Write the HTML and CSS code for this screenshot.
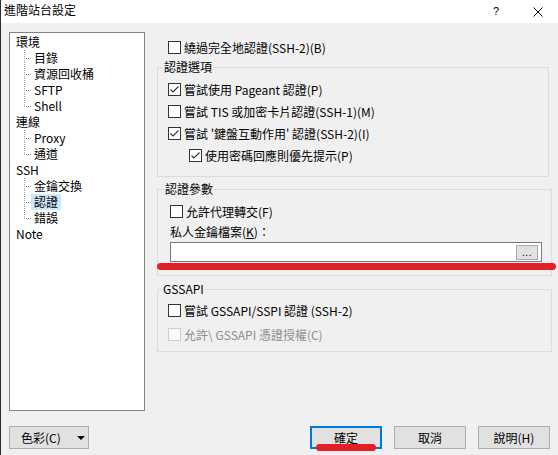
FILE: index.html
```html
<!DOCTYPE html>
<html lang="zh-Hant">
<head>
<meta charset="utf-8">
<title>進階站台設定</title>
<link rel="stylesheet" href="styles.css">
</head>
<body>
<div class="win">
  <div class="titlebar">
    <span class="title">進階站台設定</span>
    <span class="help">?</span>
    <svg class="close" width="10" height="10" viewBox="0 0 10 10"><path d="M0.5 0.5 L9.5 9.5 M9.5 0.5 L0.5 9.5" stroke="#000" stroke-width="1" fill="none"/></svg>
  </div>

  <div class="main">
    <div class="tree">
      <div class="node top">環境</div>
      <div class="node child"><i class="conn"></i><span class="lbl">目錄</span></div>
      <div class="node child"><i class="conn"></i><span class="lbl">資源回收桶</span></div>
      <div class="node child"><i class="conn"></i><span class="lbl">SFTP</span></div>
      <div class="node child last"><i class="conn"></i><span class="lbl">Shell</span></div>
      <div class="node top">連線</div>
      <div class="node child"><i class="conn"></i><span class="lbl">Proxy</span></div>
      <div class="node child last"><i class="conn"></i><span class="lbl">通道</span></div>
      <div class="node top">SSH</div>
      <div class="node child"><i class="conn"></i><span class="lbl">金鑰交換</span></div>
      <div class="node child"><i class="conn"></i><span class="lbl sel">認證</span></div>
      <div class="node child last"><i class="conn"></i><span class="lbl">錯誤</span></div>
      <div class="node top">Note</div>
    </div>

    <div class="panel">
      <div class="row first">
        <svg class="cb" viewBox="0 0 13 13"><rect x="0.5" y="0.5" width="12" height="12" fill="#fff" stroke="#333"/></svg>
        <span>繞過完全地認證(SSH-2)(B)</span>
      </div>

      <fieldset class="grp g1">
        <legend>認證選項</legend>
        <div class="row">
          <svg class="cb" viewBox="0 0 13 13"><rect x="0.5" y="0.5" width="12" height="12" fill="#fff" stroke="#333"/><path d="M2.5 6.5 L5 9 L10.5 3.5" fill="none" stroke="#333" stroke-width="1.1"/></svg>
          <span>嘗試使用 Pageant 認證(P)</span>
        </div>
        <div class="row">
          <svg class="cb" viewBox="0 0 13 13"><rect x="0.5" y="0.5" width="12" height="12" fill="#fff" stroke="#333"/></svg>
          <span>嘗試 TIS 或加密卡片認證(SSH-1)(M)</span>
        </div>
        <div class="row">
          <svg class="cb" viewBox="0 0 13 13"><rect x="0.5" y="0.5" width="12" height="12" fill="#fff" stroke="#333"/><path d="M2.5 6.5 L5 9 L10.5 3.5" fill="none" stroke="#333" stroke-width="1.1"/></svg>
          <span>嘗試 '鍵盤互動作用' 認證(SSH-2)(I)</span>
        </div>
        <div class="row indent">
          <svg class="cb" viewBox="0 0 13 13"><rect x="0.5" y="0.5" width="12" height="12" fill="#fff" stroke="#333"/><path d="M2.5 6.5 L5 9 L10.5 3.5" fill="none" stroke="#333" stroke-width="1.1"/></svg>
          <span>使用密碼回應則優先提示(P)</span>
        </div>
      </fieldset>

      <fieldset class="grp g2">
        <legend>認證參數</legend>
        <div class="row">
          <svg class="cb" viewBox="0 0 13 13"><rect x="0.5" y="0.5" width="12" height="12" fill="#fff" stroke="#333"/></svg>
          <span>允許代理轉交(F)</span>
        </div>
        <div class="keylabel">私人金鑰檔案(<u>K</u>)：</div>
        <div class="input"><span class="browse">...</span></div>
      </fieldset>

      <fieldset class="grp g3">
        <legend>GSSAPI</legend>
        <div class="row tall">
          <svg class="cb" viewBox="0 0 13 13"><rect x="0.5" y="0.5" width="12" height="12" fill="#fff" stroke="#333"/></svg>
          <span>嘗試 GSSAPI/SSPI 認證 (SSH-2)</span>
        </div>
        <div class="row tall disabled">
          <svg class="cb" viewBox="0 0 13 13"><rect x="0.5" y="0.5" width="12" height="12" fill="#fbfbfb" stroke="#cccccc"/></svg>
          <span>允許\ GSSAPI 憑證授權(C)</span>
        </div>
      </fieldset>
    </div>
  </div>

  <div class="footer">
    <div class="btn color">色彩(C)<svg class="arrow" width="8" height="4" viewBox="0 0 8 4"><path d="M0 0 H8 L4 4 Z" fill="#000"/></svg></div>
    <div class="actions">
      <div class="btn default">確定</div>
      <div class="btn">取消</div>
      <div class="btn">說明(H)</div>
    </div>
  </div>

  <div class="mark mark-key"></div>
  <div class="mark mark-ok"></div>
</div>
</body>
</html>
```

FILE: styles.css
```css
html, body {
  margin: 0;
  padding: 0;
}

body {
  width: 558px;
  height: 455px;
  overflow: hidden;
  background: #f0f0f0;
  font-family: "Noto Sans CJK TC", "Noto Sans", sans-serif;
  font-size: 12px;
  color: #000;
}

.win {
  position: relative;
  box-sizing: border-box;
  width: 558px;
  height: 455px;
  border-left: 1px solid #2d2d2d;
  background: #f0f0f0;
}

/* title bar */
.titlebar {
  height: 23px;
  background: #fff;
  display: flex;
  align-items: flex-start;
  padding: 0 15px 0 3px;
}

.title {
  flex: 1;
  line-height: 20px;
  font-size: 12px;
}

.help {
  font-family: "Liberation Sans", sans-serif;
  font-size: 11px;
  line-height: 11px;
  margin-top: 6px;
  margin-right: 34px;
}

.close {
  margin-top: 7px;
}

/* main area */
.main {
  display: flex;
  padding: 9px 0 0 8px;
}

.tree {
  box-sizing: border-box;
  width: 136px;
  height: 379px;
  border: 1px solid #828282;
  background: #fff;
  padding-top: 1px;
  flex: none;
}

.node {
  height: 16px;
  line-height: 16px;
  display: flex;
  align-items: center;
  white-space: nowrap;
}

.node.top {
  padding-left: 6px;
}

.node.child {
  padding-left: 14px;
}

.conn {
  flex: none;
  width: 7px;
  height: 16px;
  background:
    repeating-linear-gradient(to bottom, #a0a0a0 0 1px, transparent 1px 2px) 0 0 / 1px 100% no-repeat,
    repeating-linear-gradient(to right, #a0a0a0 0 1px, transparent 1px 2px) 0 8px / 100% 1px no-repeat;
}

.node.last .conn {
  background-size: 1px 9px, 100% 1px;
}

.lbl {
  padding: 0 3px;
  line-height: 16px;
}

.lbl.sel {
  background: #cce8ff;
}

/* right panel */
.panel {
  width: 395px;
  margin-left: 12px;
  flex: none;
}

.row {
  height: 22px;
  display: flex;
  align-items: center;
  white-space: nowrap;
}

.row.first {
  margin-top: 4px;
  padding-left: 11px;
}

.row.indent {
  padding-left: 21px;
}

.row.tall {
  height: 24px;
}

.row.disabled {
  color: #8d8d8d;
}

.cb {
  width: 13px;
  height: 13px;
  flex: none;
  margin-right: 3px;
}

.grp {
  margin: 0;
  min-width: 0;
  border: 1px solid #dcdcdc;
  padding: 0;
}

.grp legend {
  line-height: 14px;
  padding: 0 2px;
}

.g1 {
  margin-top: 2px;
  margin-right: 3px;
  padding: 4px 0 10px 10px;
}

.g1 legend {
  margin-left: -6px;
}

.g2 {
  margin-top: 5px;
  padding: 4px 9px 13px 12px;
}

.g2 legend {
  margin-left: -7px;
}

.g3 {
  margin-top: 6px;
  padding: 2px 0 5px 10px;
}

.g3 legend {
  margin-left: -7px;
}

.keylabel {
  height: 20px;
  line-height: 20px;
}

.keylabel u {
  text-decoration: underline;
  text-underline-offset: 1px;
}

.input {
  box-sizing: border-box;
  height: 20px;
  border: 1px solid #7a7a7a;
  background: #fff;
  display: flex;
  justify-content: flex-end;
  align-items: center;
  padding-right: 3px;
}

.browse {
  box-sizing: border-box;
  width: 22px;
  height: 15px;
  background: #e1e1e1;
  border: 1px solid #adadad;
  font-family: "Liberation Sans", sans-serif;
  font-size: 10px;
  line-height: 14px;
  text-align: center;
  letter-spacing: 0.5px;
}

/* footer */
.footer {
  display: flex;
  justify-content: space-between;
  align-items: flex-start;
  margin-top: 15px;
  padding: 0 8px 0 8px;
}

.actions {
  display: flex;
  gap: 12px;
}

.btn {
  box-sizing: border-box;
  width: 72px;
  height: 23px;
  background: #e1e1e1;
  border: 1px solid #adadad;
  display: flex;
  align-items: center;
  justify-content: center;
  line-height: 16px;
}

.btn.color {
  width: 80px;
  justify-content: flex-start;
  padding-left: 11px;
}

.btn.color .arrow {
  margin-left: 16px;
}

.btn.default {
  border: 2px solid #0078d7;
}

/* red annotation strokes */
.mark {
  position: absolute;
  background: #e41f26;
  border-radius: 4px;
}

.mark-key {
  left: 156px;
  top: 263px;
  width: 399px;
  height: 7px;
}

.mark-ok {
  left: 315px;
  top: 444px;
  width: 60px;
  height: 7px;
}
```
